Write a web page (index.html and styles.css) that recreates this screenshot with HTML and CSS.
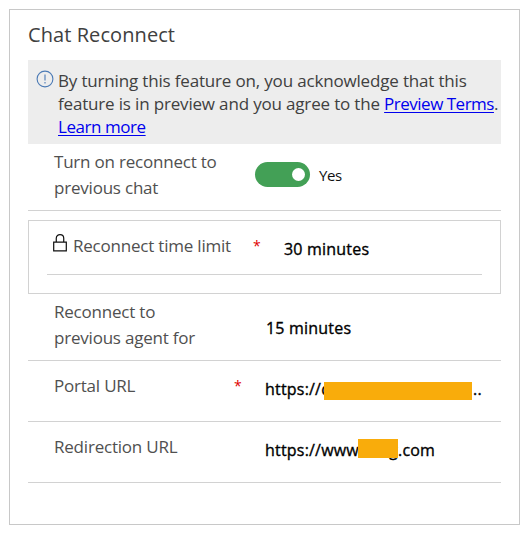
FILE: index.html
```
<!DOCTYPE html>
<html lang="en">
<head>
<meta charset="utf-8">
<title>Chat Reconnect</title>
<link rel="stylesheet" href="styles.css">
</head>
<body>
<section class="panel">
  <h1 class="title">Chat Reconnect</h1>
  <div class="notice">
    <svg class="notice-icon" viewBox="0 0 18 18"><circle cx="9" cy="9" r="7.9"/><path d="M9 4.5V10.5M9 12V13.5"/></svg>
    <p class="notice-text"><span class="n1">By turning this feature on, you acknowledge that this</span><br><span class="n2">feature is in preview and you agree to the <a class="terms" href="#">Preview Terms</a>.</span><br><a class="n3" href="#">Learn more</a></p>
  </div>
  <div class="row row-toggle">
    <div class="label">Turn on reconnect to<br>previous chat</div>
    <div class="switch"><i class="knob"></i></div>
    <span class="yes">Yes</span>
  </div>
  <div class="locked">
    <div class="locked-row">
      <svg class="lock" viewBox="0 0 15 20"><path d="M.75 9H14.25V18.5H.75ZM3.5 9V5C3.5-.4 11.5-.4 11.5 5V9"/></svg>
      <div class="label">Reconnect time limit</div>
      <span class="star">*</span>
      <span class="value">30 minutes</span>
    </div>
  </div>
  <div class="row row-agent">
    <div class="label">Reconnect to<br>previous agent for</div>
    <span class="value">15 minutes</span>
  </div>
  <div class="row row-url">
    <div class="label">Portal URL</div>
    <span class="star">*</span>
    <span class="value"><span class="scheme">https://c</span><i class="mask mask-portal"></i><span class="dots">..</span></span>
  </div>
  <div class="row row-url">
    <div class="label">Redirection URL</div>
    <span class="star"></span>
    <span class="value"><span class="prefix">https://www</span><span class="host">g<i class="mask mask-host"></i></span><span>.com</span></span>
  </div>
</section>
</body>
</html>
```
FILE: styles.css
```
* { box-sizing: border-box; }
body { margin: 0; background: #fff; font: 17px/26px "Open Sans", "Noto Sans", sans-serif; color: #505050; white-space: nowrap; }
.panel { width: 511px; height: 516px; margin: 9px; padding: 0 18px; border: 1px solid #c8c8c8; }
.title { height: 50px; margin: 0; padding-top: 12px; font-size: 20px; line-height: 26px; font-weight: 400; color: #404040; letter-spacing: .08px; }
.notice { display: flex; height: 84px; padding: 9px 0 0 8px; background: #ededed; color: #404040; }
.notice-icon { flex: none; width: 18px; height: 18px; margin-top: 1px; fill: none; stroke: #4b7ab5; stroke-width: 1.1; }
.notice-text { margin: 0 0 0 4px; line-height: 23px; }
.n1 { letter-spacing: -.17px; }
.n2 { letter-spacing: -.17px; }
.terms { letter-spacing: -.5px; }
.n3 { letter-spacing: -.45px; }
a { color: #00e; text-decoration: underline; text-decoration-thickness: 1px; text-underline-offset: 2px; }
.row { display: flex; border-bottom: 1px solid #d2d2d2; padding-left: 26px; }
.label { flex: none; width: 180px; letter-spacing: -.21px; }
.row-toggle { height: 67px; padding-top: 5px; }
.row-toggle .label { width: 201px; }
.switch { display: flex; justify-content: flex-end; align-items: center; width: 55px; height: 25px; margin-top: 13px; padding-right: 5px; border-radius: 13px; background: #43a056; }
.knob { width: 13px; height: 13px; border-radius: 50%; background: #fff; }
.yes { margin: 13px 0 0 9px; font-size: 15px; letter-spacing: -.4px; color: #111; }
.locked { height: 74px; margin-top: 9px; padding: 0 18px; border: 1px solid #d2d2d2; }
.locked-row { display: flex; height: 54px; padding: 12px 0 0 6px; border-bottom: 1px solid #d2d2d2; }
.lock { flex: none; width: 14px; height: 20px; fill: none; stroke: #111; stroke-width: 1.3; }
.locked .label { margin-left: 6px; }
.star { width: 9px; color: #e00000; font-size: 14px; }
.value { display: flex; height: 26px; color: #000; font-size: 16px; letter-spacing: .2px; -webkit-text-stroke: .35px #000; }
.locked .value { margin: 3px 0 0 22px; }
.row-agent { height: 67px; padding-top: 5px; }
.row-agent .value { margin: 16px 0 0 32px; }
.row-url { height: 61px; padding-top: 12px; }
.row-url .value { margin: 3px 0 0 22px; }
.scheme { width: 59px; }
.mask { display: block; background: #f9ac0b; }
.mask-portal { position: relative; width: 148px; height: 18px; margin-top: 6px; }
.dots { margin-left: 1px; }
.prefix { width: 93px; }
.host { position: relative; width: 40px; text-align: right; }
.mask-host { position: absolute; left: 0; top: 2px; width: 40px; height: 19px; }
```
